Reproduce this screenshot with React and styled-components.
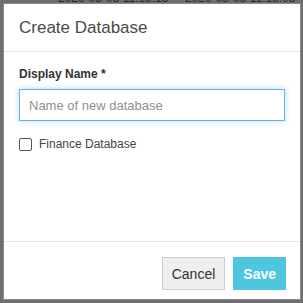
import React from "react";
import styled, { createGlobalStyle } from "styled-components";

const GlobalStyle = createGlobalStyle`
  html, body {
    margin: 0;
    padding: 0;
    background: #6f6f6f;
    font-family: "Liberation Sans", Arial, sans-serif;
  }
`;

const Page = styled.div`
  position: relative;
  width: 303px;
  height: 303px;
  overflow: hidden;
  background: #6f6f6f;
  padding: 3px 2px 3px 3px;
  box-sizing: border-box;
`;

// table row behind the backdrop, only its bottom edge peeks out
const BehindRow = styled.div`
  position: absolute;
  top: -8px;
  left: 0;
  right: 0;
  display: flex;
  font-size: 12px;
  color: #2a2a2a;
  line-height: 12px;
`;

const BehindCell = styled.div`
  width: ${(p) => p.width}px;
  padding-left: ${(p) => p.pad}px;
  box-sizing: border-box;
  white-space: nowrap;
`;

const Modal = styled.div`
  position: relative;
  height: 297px;
  background: #fff;
  border: 1px solid #8a8a8a;
  box-sizing: border-box;
  display: flex;
  flex-direction: column;
`;

const Header = styled.div`
  height: 48px;
  padding: 0 15px;
  border-bottom: 1px solid #e5e5e5;
  display: flex;
  align-items: center;
  box-sizing: border-box;
`;

const Title = styled.h4`
  margin: 0;
  font-size: 17px;
  font-weight: normal;
  color: #4a4a4a;
  line-height: 20px;
`;

const Body = styled.div`
  flex: 1;
  padding: 15px 15px 0;
`;

const Label = styled.label`
  display: block;
  font-size: 12px;
  font-weight: bold;
  color: #333;
  line-height: 14px;
  margin-bottom: 8px;
`;

const Input = styled.input`
  display: block;
  width: 100%;
  height: 32px;
  box-sizing: border-box;
  padding: 0 9px;
  font-family: "Liberation Sans", Arial, sans-serif;
  font-size: 13px;
  color: #555;
  border: 1px solid #66afe9;
  outline: none;
  box-shadow: 0 0 6px rgba(102, 175, 233, 0.45);
  &::placeholder {
    color: #8f8f8f;
  }
`;

const CheckRow = styled.label`
  display: flex;
  align-items: center;
  gap: 7px;
  margin-top: 16px;
  font-size: 12px;
  color: #444;
`;

const Box = styled.span`
  width: 11px;
  height: 11px;
  border: 1px solid #555;
  border-radius: 2px;
  background: #fff;
`;

const Footer = styled.div`
  height: 58px;
  border-top: 1px solid #e5e5e5;
  padding: 15px 14px 0;
  box-sizing: border-box;
  display: flex;
  justify-content: flex-end;
  align-items: flex-start;
  gap: 8px;
`;

const Button = styled.button`
  height: 33px;
  padding: 0 9px;
  font-family: "Liberation Sans", Arial, sans-serif;
  font-size: 14px;
  font-weight: ${(p) => (p.primary ? "bold" : "normal")};
  color: ${(p) => (p.primary ? "#fff" : "#333")};
  background: ${(p) => (p.primary ? "#4fc6e0" : "#eeefee")};
  border: 1px solid ${(p) => (p.primary ? "#4fc6e0" : "#cccccc")};
  border-radius: 0;
  cursor: pointer;
`;

export default function App() {
  return (
    <>
      <GlobalStyle />
      <Page>
        <BehindRow>
          <BehindCell width={185} pad={58}>2020-03-03 11:15:18</BehindCell>
          <BehindCell width={118} pad={0}>2020-03-03 11:15:08</BehindCell>
        </BehindRow>
        <Modal>
          <Header>
            <Title>Create Database</Title>
          </Header>
          <Body>
            <Label>Display Name *</Label>
            <Input placeholder="Name of new database" />
            <CheckRow>
              <Box />
              Finance Database
            </CheckRow>
          </Body>
          <Footer>
            <Button>Cancel</Button>
            <Button primary>Save</Button>
          </Footer>
        </Modal>
      </Page>
    </>
  );
}
